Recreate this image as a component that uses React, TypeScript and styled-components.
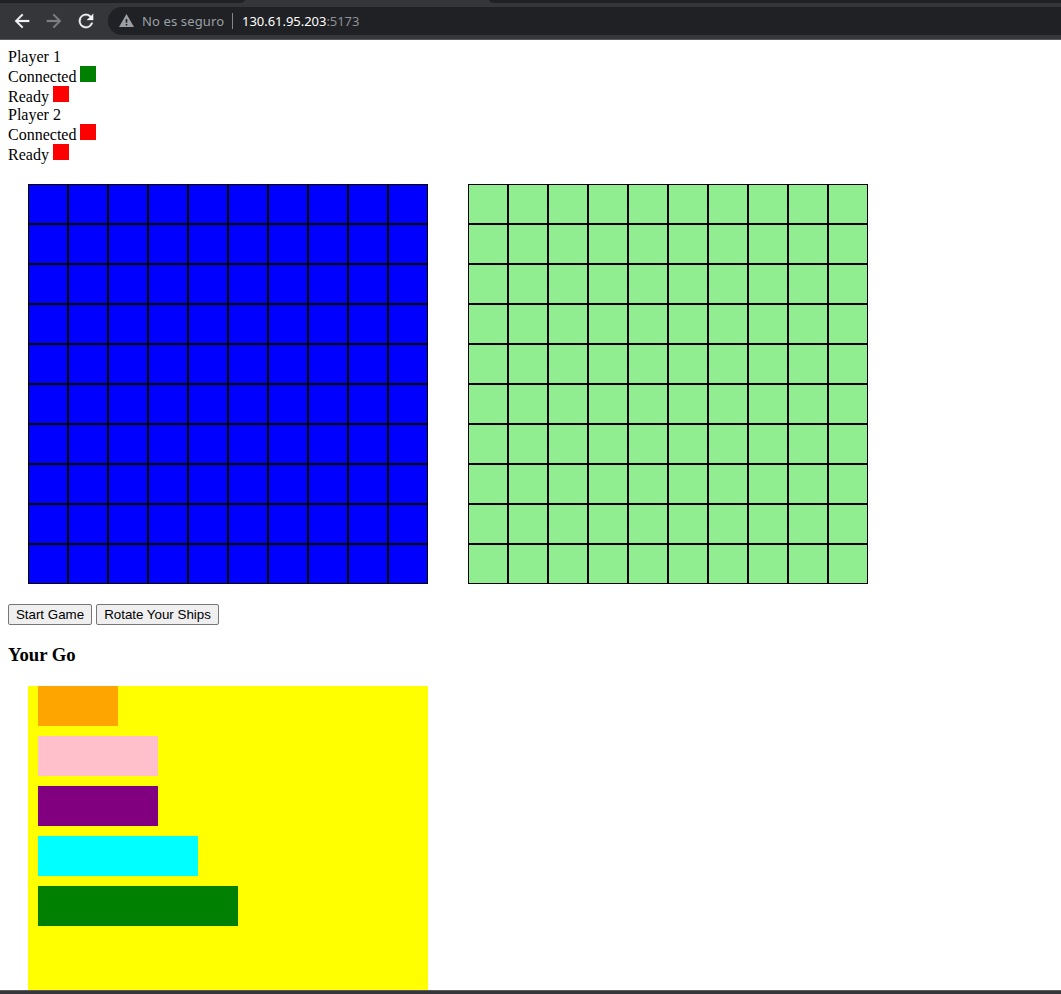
import React from "react";
import styled, { createGlobalStyle } from "styled-components";

const GlobalStyle = createGlobalStyle`
  body {
    margin: 0;
    background: #fff;
    color: #000;
    font: 16px/18px "Liberation Serif", "Times New Roman", serif;
  }
`;

const Window = styled.div`
  display: flex;
  flex-direction: column;
  height: 994px;
  overflow: hidden;
`;

const TabStrip = styled.div`
  display: flex;
  justify-content: space-between;
  flex: none;
  height: 3px;
  background: #35363a;
`;

const InactiveTabs = styled.div<{ $width: number; $side: "left" | "right" }>`
  width: ${(p) => p.$width}px;
  background: #202124;
  border-bottom-${(p) => (p.$side === "left" ? "right" : "left")}-radius: 6px 3px;
`;

const Toolbar = styled.div`
  display: flex;
  flex: none;
  align-items: center;
  box-sizing: border-box;
  height: 37px;
  padding: 0 0 1px 14px;
  background: #35363a;
  border-bottom: 1px solid #5b595e;
`;

const NavIcon = styled.svg<{ $dim?: boolean }>`
  width: 16px;
  height: 16px;
  margin-right: 16px;
  fill: ${(p) => (p.$dim ? "#7e7f82" : "#f1f2f3")};
  stroke: ${(p) => (p.$dim ? "#7e7f82" : "#f1f2f3")};
  stroke-width: 0.3;
`;

const AddressBar = styled.div`
  display: flex;
  flex: 1;
  align-items: center;
  box-sizing: border-box;
  height: 28px;
  margin-left: -2px;
  padding-left: 11px;
  border-radius: 14px 0 0 14px;
  background: #202124;
  font: 13px/28px "Noto Sans", "Open Sans", sans-serif;
  white-space: nowrap;
`;

const WarningIcon = styled.svg`
  width: 15px;
  height: 13px;
  margin-right: 8px;
  fill: #9aa0a6;
`;

const SecurityLabel = styled.span`
  width: 90px;
  color: #9aa0a6;
  letter-spacing: 0.13px;
`;

const Divider = styled.span`
  width: 1px;
  height: 16px;
  margin-right: 9px;
  background: #80868b;
`;

const Host = styled.span`
  color: #fff;
  letter-spacing: -0.03px;
`;

const Port = styled.span`
  color: #8e9195;
  letter-spacing: -0.08px;
`;

const Page = styled.main`
  flex: 1;
  min-height: 0;
  padding: 8px 8px 0;
  overflow: hidden;
`;

const PlayerName = styled.div`
  height: 18px;
`;

const StatusRow = styled.div`
  height: 20px;
  line-height: 22px;
  display: flex;
  gap: 4px;
`;

const Indicator = styled.span<{ $on?: boolean }>`
  width: 16px;
  height: 16px;
  background: ${(p) => (p.$on ? "green" : "red")};
`;

const Boards = styled.div`
  display: flex;
  gap: 40px;
  margin: 20px;
`;

const Board = styled.div<{ $color: string }>`
  display: grid;
  grid-template-columns: repeat(10, 40px);
  grid-auto-rows: 40px;
  background: ${(p) => p.$color};
`;

const Cell = styled.div`
  border: 1px solid #000;
`;

const Actions = styled.div`
  display: flex;
  gap: 4px;
  height: 21px;
`;

const ActionButton = styled.button<{ $width: number }>`
  box-sizing: border-box;
  width: ${(p) => p.$width}px;
  height: 21px;
  padding: 0;
  border: 1px solid #767676;
  border-radius: 2px;
  background: #efefef;
  color: #000;
  font: 13.333px/19px "Liberation Sans", Arial, sans-serif;
  white-space: nowrap;
`;

const TurnHeading = styled.h3`
  height: 22px;
  margin: 19px 0 20px;
  font-size: 18.72px;
  line-height: 22px;
`;

const Dock = styled.div`
  display: flex;
  flex-direction: column;
  gap: 10px;
  box-sizing: border-box;
  width: 400px;
  height: 400px;
  margin-left: 20px;
  padding-left: 10px;
  background: yellow;
`;

const Ship = styled.div<{ $length: number; $color: string }>`
  width: ${(p) => p.$length * 40}px;
  height: 40px;
  background: ${(p) => p.$color};
`;

const BottomEdge = styled.div`
  box-sizing: border-box;
  flex: none;
  height: 4px;
  border-top: 1px solid #5b595e;
  background: #35363a;
`;

const cells = Array.from({ length: 100 }, (_, i) => i);

const ships = [
  { length: 2, color: "orange" },
  { length: 3, color: "pink" },
  { length: 3, color: "purple" },
  { length: 4, color: "cyan" },
  { length: 5, color: "green" },
];

function PlayerStatus({ name, connected }: { name: string; connected?: boolean }) {
  return (
    <section>
      <PlayerName>{name}</PlayerName>
      <StatusRow>
        Connected <Indicator $on={connected} />
      </StatusRow>
      <StatusRow>
        Ready <Indicator />
      </StatusRow>
    </section>
  );
}

function Grid({ color }: { color: string }) {
  return (
    <Board $color={color}>
      {cells.map((i) => (
        <Cell key={i} />
      ))}
    </Board>
  );
}

export default function App() {
  return (
    <Window>
      <GlobalStyle />
      <TabStrip>
        <InactiveTabs $width={245} $side="left" />
        <InactiveTabs $width={572} $side="right" />
      </TabStrip>
      <Toolbar>
        <NavIcon viewBox="4 4 16 16">
          <path d="M20 11H7.83l5.59-5.59L12 4l-8 8 8 8 1.41-1.41L7.83 13H20v-2z" transform="translate(1.2 1.2) scale(.9)" />
        </NavIcon>
        <NavIcon viewBox="4 4 16 16" $dim>
          <path d="M12 4l-1.41 1.41L16.17 11H4v2h12.17l-5.58 5.59L12 20l8-8z" transform="translate(1.2 1.2) scale(.9)" />
        </NavIcon>
        <NavIcon viewBox="4 4 16 16">
          <path d="M17.65 6.35A7.96 7.96 0 0 0 12 4a8 8 0 1 0 7.73 10h-2.08A6 6 0 1 1 12 6c1.66 0 3.14.69 4.22 1.78L13 11h7V4l-2.35 2.35z" transform="translate(1.2 1.2) scale(.9)" />
        </NavIcon>
        <AddressBar>
          <WarningIcon viewBox="0 0 15 13">
            <path fillRule="evenodd" d="M7.5 0 15 13H0L7.5 0ZM6.7 5v3.8h1.6V5H6.7Zm0 4.9v1.6h1.6V9.9H6.7Z" />
          </WarningIcon>
          <SecurityLabel>No es seguro</SecurityLabel>
          <Divider />
          <Host>130.61.95.203</Host>
          <Port>:5173</Port>
        </AddressBar>
      </Toolbar>
      <Page>
        <PlayerStatus name="Player 1" connected />
        <PlayerStatus name="Player 2" />
        <Boards>
          <Grid color="blue" />
          <Grid color="lightgreen" />
        </Boards>
        <Actions>
          <ActionButton $width={84}>Start Game</ActionButton>
          <ActionButton $width={123}>Rotate Your Ships</ActionButton>
        </Actions>
        <TurnHeading>Your Go</TurnHeading>
        <Dock>
          {ships.map((s) => (
            <Ship key={s.color} $length={s.length} $color={s.color} />
          ))}
        </Dock>
      </Page>
      <BottomEdge />
    </Window>
  );
}
